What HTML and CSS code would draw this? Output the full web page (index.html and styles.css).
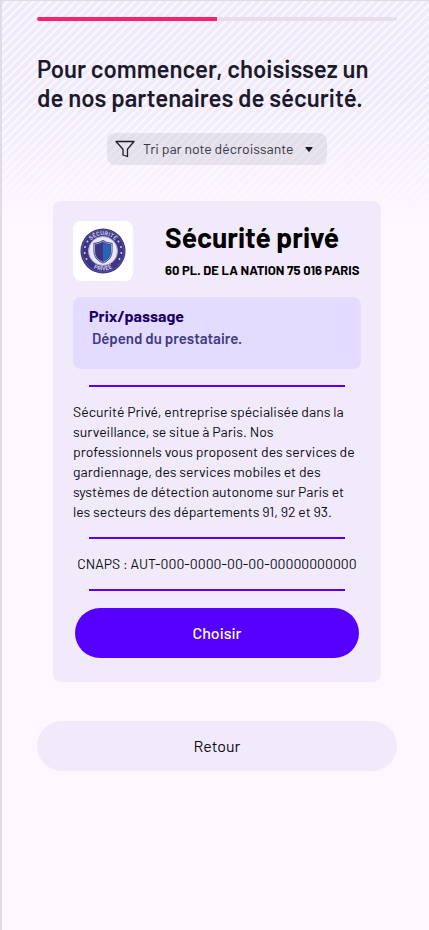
FILE: index.html
```html
<!DOCTYPE html>
<html lang="fr">
<head>
  <meta charset="UTF-8">
  <meta name="viewport" content="width=device-width, initial-scale=1.0">
  <title>Choix du partenaire de sécurité</title>
  <link rel="stylesheet" href="styles.css">
</head>
<body>
  <main class="page">
    <div class="progress">
      <div class="progress-bar" style="width: 50%"></div>
    </div>

    <h1 class="title">Pour commencer, choisissez un de nos partenaires de sécurité.</h1>

    <div class="sort">
      <svg class="sort-icon" viewBox="0 0 20 18" aria-hidden="true">
        <path d="M1 1.5H19L12.5 9.2V16.5L8 15V9.2Z" fill="none" stroke="#1c1b2b" stroke-width="1.3" stroke-linejoin="round"/>
      </svg>
      <select class="sort-select" aria-label="Trier les partenaires">
        <option>Tri par note décroissante</option>
        <option>Tri par note croissante</option>
      </select>
      <svg class="sort-caret" viewBox="0 0 8 5" aria-hidden="true">
        <path d="M0.8 0H7.2Q8 0 7.5 0.8L4.6 4.6Q4 5 3.4 4.6L0.5 0.8Q0 0 0.8 0Z" fill="#1c1b2b"/>
      </svg>
    </div>

    <article class="card">
      <header class="card-header">
        <div class="card-logo">
          <svg class="card-badge" viewBox="0 0 46 46" role="img" aria-label="Sécurité privée">
            <defs>
              <path id="arc-top" d="M7.2 23A15.8 15.8 0 0 1 38.8 23"/>
              <path id="arc-bottom" d="M3.5 23A19.5 19.5 0 0 0 42.5 23"/>
            </defs>
            <circle cx="23" cy="23" r="22.5" fill="#3b3583"/>
            <circle cx="23" cy="23" r="21" fill="none" stroke="#6c67a8" stroke-width="0.6"/>
            <circle cx="23" cy="23" r="14.5" fill="#e9e8f4" stroke="#aaa6d0" stroke-width="1"/>
            <g class="badge-text">
              <text><textPath href="#arc-top" startOffset="50%">SÉCURITÉ</textPath></text>
              <text><textPath href="#arc-bottom" startOffset="50%">PRIVÉE</textPath></text>
            </g>
            <g fill="#dedcf0">
              <circle cx="5" cy="19" r="0.9"/>
              <circle cx="4.7" cy="25" r="0.9"/>
              <circle cx="6.5" cy="31" r="0.9"/>
              <circle cx="7.5" cy="13.5" r="0.9"/>
              <circle cx="41" cy="19" r="0.9"/>
              <circle cx="41.3" cy="25" r="0.9"/>
              <circle cx="39.5" cy="31" r="0.9"/>
              <circle cx="38.5" cy="13.5" r="0.9"/>
            </g>
            <path d="M23 12Q27.5 15 32.5 15V23Q32.5 31.5 23 35.5Q13.5 31.5 13.5 23V15Q18.5 15 23 12Z" fill="#3b3583"/>
            <path d="M23 13.3Q27.5 16 31.5 16V23Q31.5 30.8 23 34.3Q14.5 30.8 14.5 23V16Q18.5 16 23 13.3Z" fill="none" stroke="#a6bfe0" stroke-width="0.8"/>
            <path d="M23 14.5Q27 16.8 30.6 16.8V23Q30.6 30 23 33.3Z" fill="#2b63b5"/>
          </svg>
        </div>
        <div class="card-heading">
          <h2 class="card-name">Sécurité privé</h2>
          <p class="card-address">60 PL. DE LA NATION 75 016 PARIS</p>
        </div>
      </header>

      <div class="price">
        <h3 class="price-label">Prix/passage</h3>
        <p class="price-value">&nbsp;Dépend du prestataire.</p>
      </div>

      <hr class="divider">
      <p class="description">Sécurité Privé, entreprise spécialisée dans la surveillance, se situe à Paris. Nos professionnels vous proposent des services de gardiennage, des services mobiles et des systèmes de détection autonome sur Paris et les secteurs des départements 91, 92 et 93.</p>
      <hr class="divider">
      <p class="cnaps">CNAPS : AUT-000-0000-00-00-00000000000</p>
      <hr class="divider">

      <button type="button" class="btn btn-primary">Choisir</button>
    </article>

    <button type="button" class="btn btn-secondary">Retour</button>
  </main>
</body>
</html>
```

FILE: styles.css
```css
* {
  box-sizing: border-box;
}

body {
  margin: 0;
  font-family: Barlow, Roboto, sans-serif;
  font-size: 14px;
  color: #1c1b2b;
  background: #fdf8ff;
}

h1, h2, h3, p {
  margin: 0;
}

.page {
  display: flex;
  flex-direction: column;
  min-height: 100vh;
  padding: 16px 32px 32px 35px;
  border-top: 1px solid #dddde8;
  border-left: 2px solid #dddde8;
  /* fondu par-dessus les rayures */
  background:
    linear-gradient(rgba(253, 248, 255, 0) 100px, #fdf8ff 225px) no-repeat,
    repeating-linear-gradient(135deg, #f1eafb 0, #f1eafb 3px, #fcf8ff 4px, #fcf8ff 5px, #f1eafb 6px);
}

/* Progression */
.progress {
  height: 4px;
  border-radius: 2px;
  background: #e4dfea;
  overflow: hidden;
}

.progress-bar {
  height: 100%;
  background: #ff226b;
}

.title {
  margin-top: 33px;
  font-size: 24px;
  font-weight: 600;
  line-height: 29px;
}

/* Tri */
.sort {
  display: flex;
  align-items: center;
  align-self: center;
  height: 32px;
  margin-top: 21px;
  padding: 0 14px 0 8px;
  border-radius: 8px;
  background: rgba(28, 27, 43, 0.08);
}

.sort-icon {
  width: 20px;
  height: 18px;
}

.sort-select {
  width: 170px;
  padding: 0 0 2px 8px;
  border: none;
  background: transparent;
  font: inherit;
  color: #363541;
  appearance: none;
  cursor: pointer;
}

.sort-caret {
  width: 8px;
  height: 5px;
}

/* Carte du partenaire */
.card {
  margin: 36px 16px 0;
  padding: 20px 20px 24px;
  border-radius: 8px;
  color: #0c0b14;
  background: #f1eafb;
}

.card-header {
  display: flex;
  gap: 32px;
}

.card-logo {
  display: flex;
  flex: none;
  align-items: center;
  justify-content: center;
  width: 60px;
  height: 60px;
  border-radius: 8px;
  background: #fff;
}

.card-badge {
  width: 46px;
  height: 46px;
}

.badge-text {
  font-size: 6px;
  font-weight: 700;
  text-anchor: middle;
  fill: #c9c6e2;
}

.card-heading {
  color: #000;
  white-space: nowrap;
}

.card-name {
  font-size: 28px;
  font-weight: 700;
  line-height: 32px;
}

.card-address {
  margin-top: 10px;
  font-size: 13px;
  font-weight: 700;
  line-height: 14px;
}

.price {
  min-height: 72px;
  margin: 16px 0;
  padding: 8px 16px;
  border-radius: 8px;
  background: #e4dcff;
}

.price-label {
  font-size: 16px;
  font-weight: 700;
  line-height: 22px;
  color: #1b0066;
}

.price-value {
  font-size: 15px;
  font-weight: 600;
  line-height: 22px;
  color: #403a80;
}

.divider {
  height: 2px;
  margin: 15px 16px;
  border: none;
  background: #5500ff;
}

.description {
  line-height: 20px;
}

.cnaps {
  line-height: 20px;
  text-align: center;
  white-space: nowrap;
}

/* Boutons */
.btn {
  display: block;
  height: 50px;
  padding: 0 24px 2px;
  border: none;
  border-radius: 25px;
  font-family: inherit;
  font-size: 16px;
  cursor: pointer;
}

.btn-primary {
  width: calc(100% - 4px);
  margin: 17px auto 0;
  font-weight: 500;
  color: #fff;
  background: #5500ff;
}

.btn-secondary {
  width: 100%;
  margin-top: 39px;
  color: #0c0b14;
  background: #f1eafb;
}
```
